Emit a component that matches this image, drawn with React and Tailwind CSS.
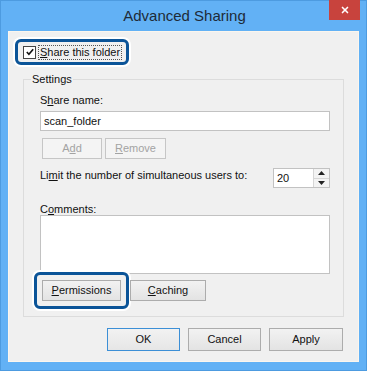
import { X } from 'lucide-react';

const font = { fontFamily: '"Liberation Sans", Arial, sans-serif' };

function WinButton({ children, className = '', disabled = false, isDefault = false }) {
  return (
    <button
      className={`flex items-center justify-center border text-[11px] leading-none whitespace-nowrap ${
        disabled
          ? 'border-[#c6c6c6] bg-[#f4f4f4] text-[#a3a3a3]'
          : isDefault
          ? 'border-[#3c8fd6] bg-gradient-to-b from-[#f2f2f2] to-[#e6e6e6] text-[#111]'
          : 'border-[#acacac] bg-gradient-to-b from-[#f2f2f2] to-[#e3e3e3] text-[#111]'
      } ${className}`}
    >
      {children}
    </button>
  );
}

export default function App() {
  return (
    <div className="w-[367px] h-[371px] bg-[#62b1f5] border border-[#4d9be0] flex flex-col" style={font}>
      {/* Title bar */}
      <div className="relative h-[30px] flex items-center justify-center">
        <span className="text-[15px] text-[#1e2b38] pl-[2px]">Advanced Sharing</span>
        <div className="absolute right-[6px] top-[-1px] w-[31px] h-[20px] bg-[#c8433d] flex items-center justify-center">
          <X className="w-[10px] h-[10px] text-white" strokeWidth={4} />
        </div>
      </div>

      {/* Client area */}
      <div className="ml-[7px] mr-[7px] mb-[8px] flex-1 bg-[#f0f0f0] border border-[#fbf6ee] flex flex-col text-[11px] text-[#111]">
        {/* Share this folder */}
        <div className="mt-[7px] ml-[6px] w-[114px] h-[26px] border-[3px] border-[#0b5498] rounded-[6px] ring-2 ring-white flex items-center pl-[5px] whitespace-nowrap">
          <span className="w-[13px] h-[13px] border border-[#444] bg-white flex items-center justify-center shrink-0">
            <svg viewBox="0 0 11 11" className="w-[10px] h-[10px]">
              <path d="M2 5.5 L4.3 8 L9 2.5" fill="none" stroke="#111" strokeWidth="1.8" />
            </svg>
          </span>
          <span className="ml-[2px] px-[1px] border border-dotted border-[#555] leading-[13px]">
            <u>S</u>hare this folder
          </span>
        </div>

        {/* Settings group */}
        <fieldset className="mt-[6px] ml-[14px] w-[321px] border border-[#dcdcdc]">
          <legend className="ml-[7px] px-[1px] leading-[16px]">Settings</legend>
          <div className="pl-[16px] pr-[13px] pb-[15px]">
            <div className="mt-[5px] leading-[16px]">
              S<u>h</u>are name:
            </div>
            <div className="mt-[3px] h-[20px] bg-white border border-[#c2c2c2] flex items-center px-[3px] leading-none">
              scan_folder
            </div>
            <div className="mt-[7px] ml-[2px] flex gap-[3px]">
              <WinButton disabled className="w-[60px] h-[21px]">
                A<u>d</u>d
              </WinButton>
              <WinButton disabled className="w-[61px] h-[21px]">
                <u>R</u>emove
              </WinButton>
            </div>
            <div className="mt-[9px] flex justify-between items-start">
              <span className="leading-[16px] mt-[-1px]">
                Li<u>m</u>it the number of simultaneous users to:
              </span>
              <div className="w-[57px] h-[20px] bg-white border border-[#c2c2c2] flex">
                <span className="flex-1 flex items-center pl-[3px] leading-none">20</span>
                <div className="w-[16px] flex flex-col border-l border-[#d6d6d6]">
                  <div className="flex-1 flex items-center justify-center bg-[#f3f3f3] border-b border-[#d6d6d6]">
                    <svg viewBox="0 0 7 4" className="w-[7px] h-[4px]">
                      <path d="M0 4 L3.5 0 L7 4 Z" fill="#222" />
                    </svg>
                  </div>
                  <div className="flex-1 flex items-center justify-center bg-[#f3f3f3]">
                    <svg viewBox="0 0 7 4" className="w-[7px] h-[4px]">
                      <path d="M0 0 L3.5 4 L7 0 Z" fill="#222" />
                    </svg>
                  </div>
                </div>
              </div>
            </div>
            <div className="mt-[15px] leading-[12px]">
              C<u>o</u>mments:
            </div>
            <div className="h-[59px] bg-white border border-[#c2c2c2]" />
            <div className="mt-[6px] ml-[2px] flex gap-[9px]">
              <div className="-m-[8px] p-[5px] border-[3px] border-[#0b5498] rounded-[6px] ring-2 ring-white">
                <WinButton className="w-[79px] h-[21px]">
                  <u>P</u>ermissions
                </WinButton>
              </div>
              <WinButton className="w-[76px] h-[21px]">
                <u>C</u>aching
              </WinButton>
            </div>
          </div>
        </fieldset>

        {/* Dialog buttons */}
        <div className="mt-[11px] pr-[15px] flex justify-end gap-[8px]">
          <WinButton isDefault className="w-[73px] h-[23px]">OK</WinButton>
          <WinButton className="w-[73px] h-[23px]">Cancel</WinButton>
          <WinButton className="w-[74px] h-[23px]">Apply</WinButton>
        </div>
      </div>
    </div>
  );
}
